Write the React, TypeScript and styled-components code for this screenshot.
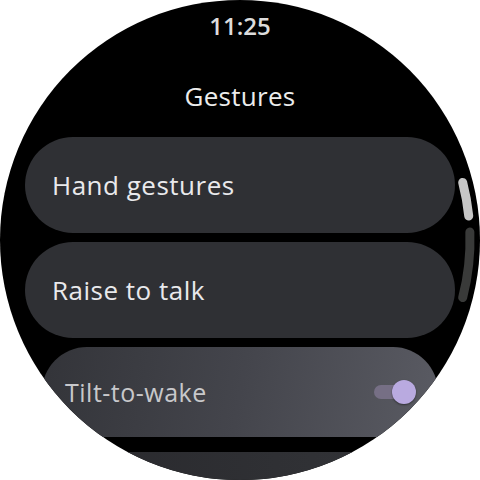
import styled, { createGlobalStyle } from "styled-components"

const GlobalStyle = createGlobalStyle`
    html, body {
        margin: 0;
        padding: 0;
        background: #ffffff;
    }
    body {
        font-family: "Open Sans", Roboto, "Liberation Sans", sans-serif;
    }
`

type Item = {
    label: string
    width: number
    height: number
    fontSize: number
    pad: number
    faded?: boolean
    toggle?: boolean
    offset?: number
}

const items: Item[] = [
    { label: "Hand gestures", width: 430, height: 96, fontSize: 26, pad: 27 },
    { label: "Raise to talk", width: 430, height: 96, fontSize: 26, pad: 27 },
    { label: "Tilt-to-wake", width: 396, height: 90, fontSize: 25, pad: 23, faded: true, toggle: true },
    { label: "", width: 360, height: 84, fontSize: 22, pad: 20, faded: true, offset: 6 },
]

const App: React.FC = () => {
    return (
        <>
            <GlobalStyle />
            <Watch>
                <Clock>11:25</Clock>
                <Title>Gestures</Title>
                <List>
                    {items.map((item, i) => (
                        <Chip
                            key={i}
                            $width={item.width}
                            $height={item.height}
                            $pad={item.pad}
                            $faded={item.faded}
                            $offset={item.offset}
                            $last={i === items.length - 1}
                        >
                            <Label $size={item.fontSize} $faded={item.faded}>{item.label}</Label>
                            {item.toggle && (
                                <Switch>
                                    <SwitchTrack />
                                    <SwitchThumb />
                                </Switch>
                            )}
                        </Chip>
                    ))}
                </List>
                <ScrollBar width="480" height="480" viewBox="0 0 480 480">
                    {/* track */}
                    <path d={arc(230, -2, 14.5)} stroke="#393a39" strokeWidth="9" strokeLinecap="round" fill="none" />
                    {/* thumb */}
                    <path d={arc(230, -14.5, -6)} stroke="#c6c6c6" strokeWidth="9" strokeLinecap="round" fill="none" />
                </ScrollBar>
            </Watch>
        </>
    )
}
export default App

// arc on the right side of the dial, angles in degrees (0 = 3 o'clock, positive = down)
function arc(r: number, from: number, to: number) {
    const p = (a: number) => {
        const rad = (a * Math.PI) / 180
        return `${(240 + r * Math.cos(rad)).toFixed(2)} ${(240 + r * Math.sin(rad)).toFixed(2)}`
    }
    return `M ${p(from)} A ${r} ${r} 0 0 1 ${p(to)}`
}

const Watch = styled.div`
    position: relative;
    width: 480px;
    height: 480px;
    border-radius: 50%;
    overflow: hidden;
    background: #000000;
    display: flex;
    flex-direction: column;
    align-items: center;
    padding-top: 12px;
    box-sizing: border-box;
`
const Clock = styled.div`
    color: #dcdcdc;
    font-size: 24px;
    font-weight: 600;
    line-height: 28px;
`
const Title = styled.div`
    margin-top: 40px;
    color: #ececec;
    font-size: 26px;
    letter-spacing: 0.3px;
    line-height: 32px;
`
const List = styled.div`
    margin-top: 25px;
    display: flex;
    flex-direction: column;
    align-items: center;
    gap: 9px;
`
const Chip = styled.div<{ $width: number; $height: number; $pad: number; $faded?: boolean; $offset?: number; $last?: boolean }>`
    flex-shrink: 0;
    width: ${p => p.$width}px;
    height: ${p => p.$height}px;
    margin-top: ${p => p.$offset || 0}px;
    border-radius: ${p => p.$height / 2}px;
    padding: 0 ${p => p.$pad}px;
    box-sizing: border-box;
    display: flex;
    align-items: center;
    justify-content: space-between;
    background: ${p =>
        p.$last
            ? "linear-gradient(90deg, #29292d 0%, #2f3034 60%, #333438 100%)"
            : p.$faded
            ? "linear-gradient(100deg, #333439 0%, #44454c 50%, #5a5b63 100%)"
            : "#2f3034"};
`
const Label = styled.span<{ $size: number; $faded?: boolean }>`
    color: ${p => (p.$faded ? "#c8c8cb" : "#e9e9ec")};
    font-size: ${p => p.$size}px;
    letter-spacing: 0.5px;
    line-height: 1;
`
const Switch = styled.div`
    position: relative;
    width: 42px;
    height: 26px;
    margin-right: -1px;
`
const SwitchTrack = styled.div`
    position: absolute;
    left: 0;
    top: 6px;
    width: 30px;
    height: 14px;
    border-radius: 7px;
    background: #766f85;
`
const SwitchThumb = styled.div`
    position: absolute;
    right: 0;
    top: 1px;
    width: 24px;
    height: 24px;
    border-radius: 50%;
    background: #b9aae0;
    box-shadow: 0 1px 2px rgba(0, 0, 0, 0.45);
`
const ScrollBar = styled.svg`
    position: absolute;
    left: 0;
    top: 0;
    pointer-events: none;
`
